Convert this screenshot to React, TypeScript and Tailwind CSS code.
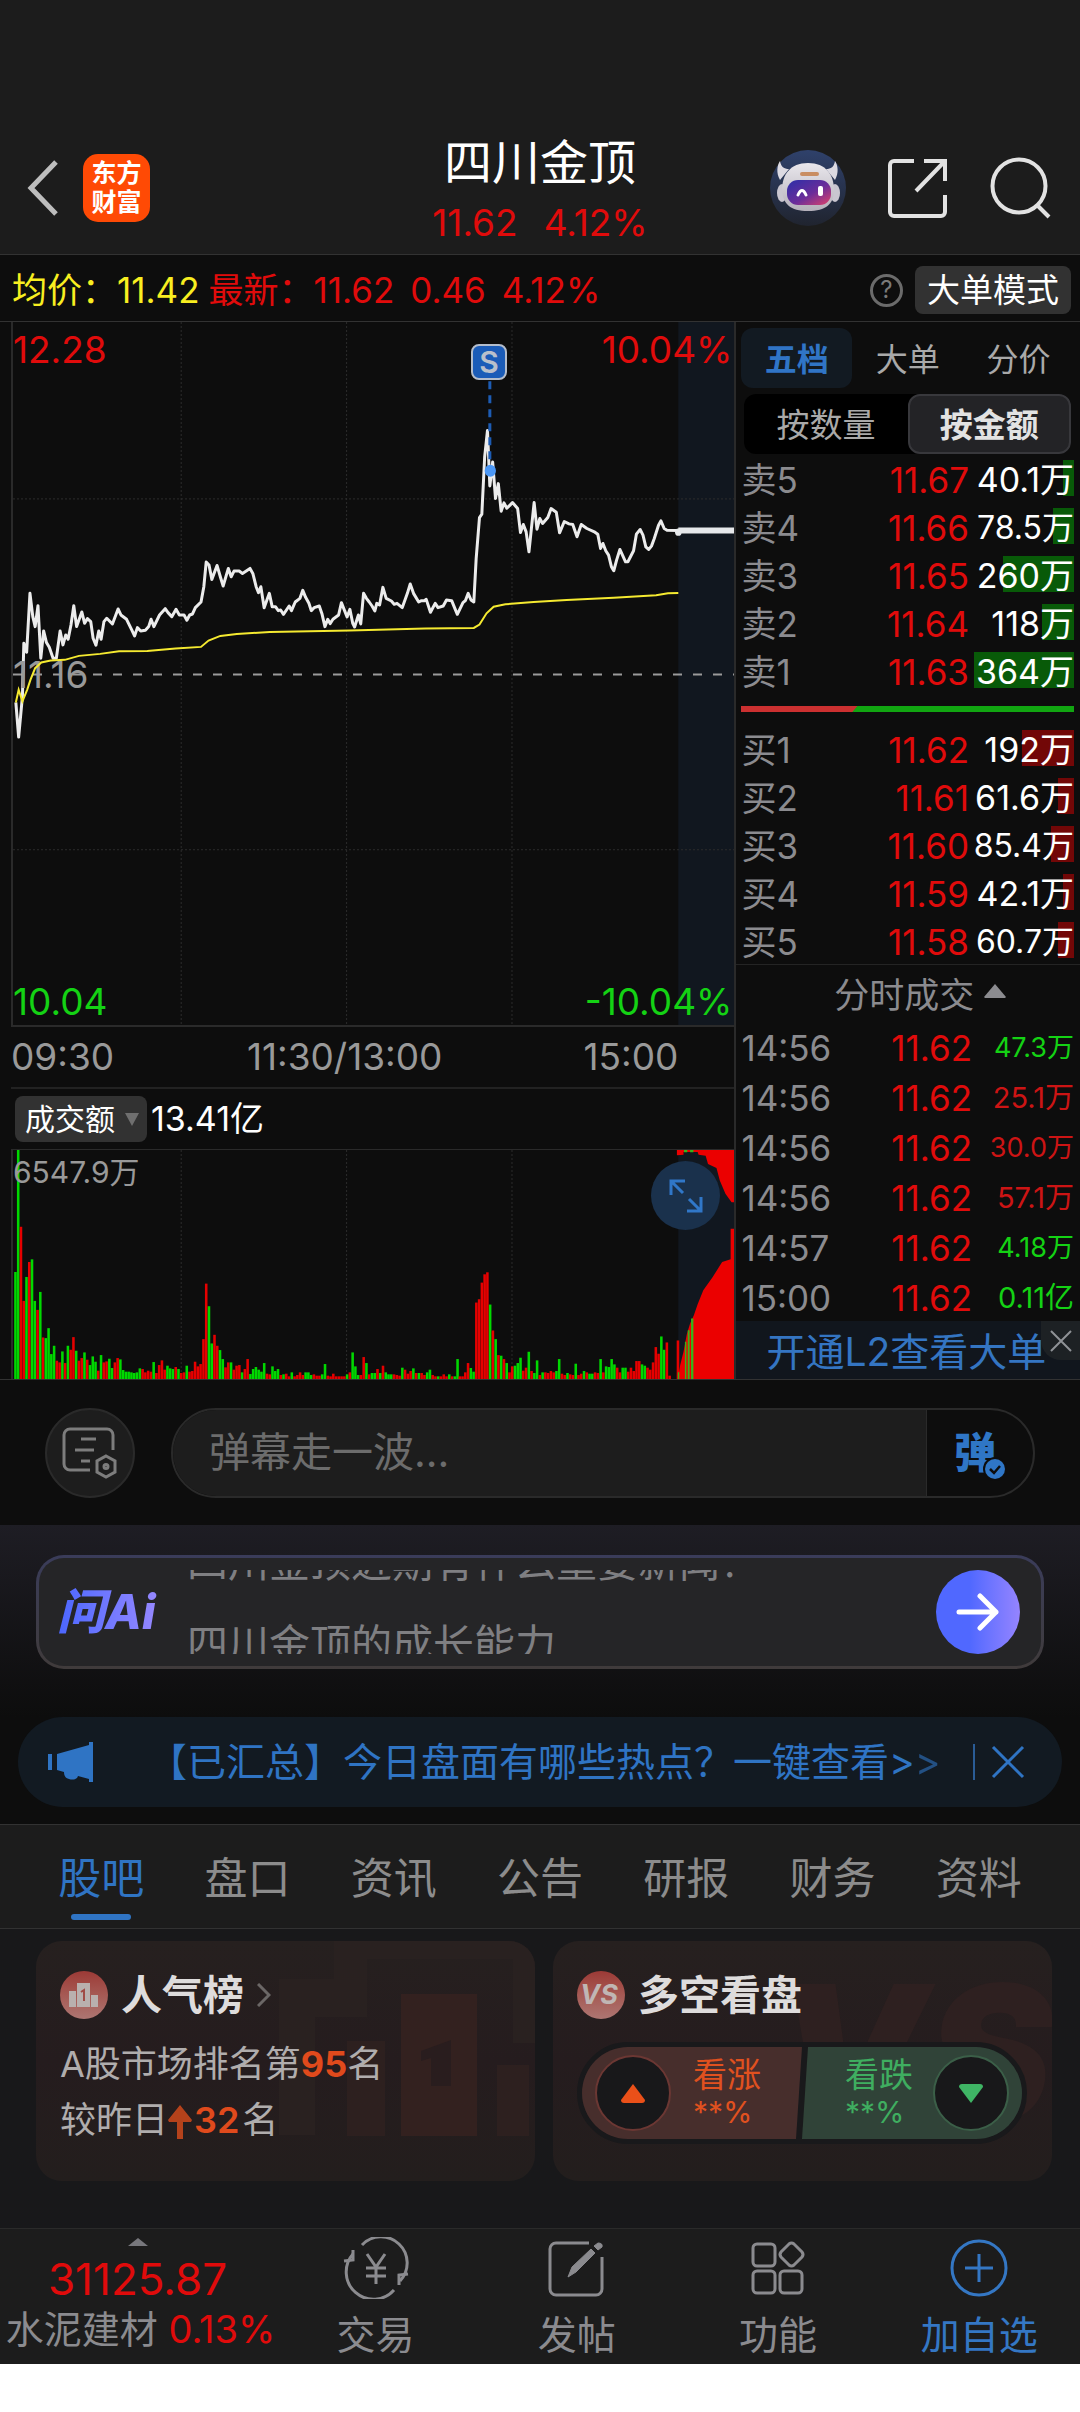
import type { ReactNode } from "react";
import { clsx } from "clsx";

const PRICE_LINE =
  "31,1178 37,1282 45,1160 48,1000 54,1027 61,850 67,920 72,950 78,887 84,1045 90,963 96,998 102,1012 110,1045 117,1045 125,963 131,1005 137,975 142,988 148,945 154,887 160,950 171,906 177,940 183,926 190,935 195,985 201,1006 207,963 212,988 218,935 224,925 236,942 248,897 254,915 266,928 277,960 283,978 289,953 296,963 306,961 313,950 318,928 324,950 336,915 348,896 354,908 362,920 371,898 378,915 388,915 394,931 400,915 406,912 412,893 424,876 430,830 435,756 441,765 447,808 458,766 465,800 471,828 482,775 488,800 494,783 505,783 512,790 528,775 534,790 541,830 546,848 551,830 558,893 569,850 575,890 582,890 588,902 593,900 599,913 611,888 616,902 624,876 634,865 640,841 646,862 653,880 658,902 664,893 675,888 681,913 687,950 693,928 698,941 704,928 716,915 722,878 734,921 740,898 746,940 750,951 758,915 763,942 769,850 775,865 781,876 787,888 793,903 797,880 803,885 810,832 817,865 828,873 834,883 840,880 851,893 862,850 868,822 875,850 886,876 892,872 898,872 902,868 911,907 921,880 927,893 938,888 945,870 956,872 962,893 968,913 980,878 985,872 991,850 997,870 1003,876 1008,745 1015,622 1020,612 1026,440 1032,360 1037,527 1043,455 1049,565 1055,520 1061,603 1067,578 1073,594 1085,577 1096,595 1102,667 1108,643 1114,665 1120,725 1131,577 1137,657 1143,625 1149,640 1160,622 1167,595 1178,606 1185,668 1195,634 1205,641 1213,643 1222,680 1231,643 1243,655 1260,666 1266,672 1272,715 1277,700 1283,722 1289,735 1295,770 1300,782 1306,750 1313,718 1325,755 1330,755 1342,722 1348,672 1356,658 1362,675 1368,710 1374,718 1380,708 1386,685 1395,645 1400,632 1407,655 1413,660 1437,661";
const AVERAGE_LINE =
  "31,1178 37,1140 45,1175 55,1140 62,1110 72,1075 85,1058 105,1052 135,1050 165,1038 210,1032 250,1024 310,1023 370,1016 424,1011 440,992 465,978 500,972 570,966 740,962 900,956 1003,954 1015,944 1030,910 1045,890 1070,883 1130,876 1200,870 1300,863 1390,856 1415,850 1437,849";

/* Minute turnover: start position of each run, then colour + height per minute. */
const VOLUME_RUNS: [number, string][] = [
  [30, "g322 g690 r458 r235 g307 r352 g360 g235 r208 g262 r125 g123 g153 g75 g100 r55 r50 g83 r48 g100 r88 r126 g85 r55 r63 g80 r58 g42 g68 g52 r25 g72 r50 r53 g61 g33 r50 r63 g59 g27 g22 g22 g20 g18 g20"],
  [294, "g32 r30 r20 r25 r22 g51 r18 r42 r56 r28 g40 g32 g30 r36 g30 r18 r20 g40 r22 r24 r52 r38 r45"],
  [429, "r120 r287 g219 g107 r133 r100 g87 g60 r35 r50 g50 r28 r40 r42 g20 r30 r60 g15 g30 g36 g28 g22 g48 r16 r14 g38 g24 g30 r12 g14 r16 r8 g20 r8 r12 r20 r12 g20 g20 g12 r14 r10 r10 g14"],
  [687, "g45 r10 r8 r16 r8 r8 r8 r8 g14 r20 g80 g38 g12 r12 r66 g48 r14 g18 g18 r30 g18 r40 g20 g14 g14 r14 r12 r10 g34 r28 r16 r24 g32 r18 g18 r18 r12 g20 g28 r12 r8 g8 r8 r14 r8 g14 r8 g8 g60"],
  [973, "r8 r8 r20 r48 g33 g22 r230 r240 r290 r315 r321 g224 r146 g120 r72 g70 r60 g48 r20 r38 g40 g48 g64 r25 r34 g82 r24 g18 g56 r12 g20 r20 r18 r24 r20 g24 g60 r16 r12 g18 r14 r12 g46 r12 r16 g24 r20 g16 g16 r20 r18 g60 r20 g38 g36 g60 g44 r34 r20 g34 g34 r22 r34 r24 r54 r54 g44 g40 r34 r28 r50 r96 r76 g128 g88 r110 r10"],
  [1436, "r116"],
];

const VOLUMES = VOLUME_RUNS.flatMap(([start, run]) =>
  run.split(" ").map((bar, i) => ({
    x: start + i * 5.86,
    color: bar[0] === "g" ? "#00d800" : "#e60000",
    height: Number(bar.slice(1)),
  })),
);

type Level = { name: string; price: string; amount: string; bar: number; small?: boolean };
const SELLS: Level[] = [
  { name: "卖5", price: "11.67", amount: "40.1万", bar: 11 },
  { name: "卖4", price: "11.66", amount: "78.5万", bar: 21, small: true },
  { name: "卖3", price: "11.65", amount: "260万", bar: 71 },
  { name: "卖2", price: "11.64", amount: "118万", bar: 32 },
  { name: "卖1", price: "11.63", amount: "364万", bar: 100 },
];
const BUYS: Level[] = [
  { name: "买1", price: "11.62", amount: "192万", bar: 52 },
  { name: "买2", price: "11.61", amount: "61.6万", bar: 16 },
  { name: "买3", price: "11.60", amount: "85.4万", bar: 23, small: true },
  { name: "买4", price: "11.59", amount: "42.1万", bar: 11 },
  { name: "买5", price: "11.58", amount: "60.7万", bar: 16, small: true },
];
const TICKS = [
  { time: "14:56", amount: "47.3万", up: false, small: true },
  { time: "14:56", amount: "25.1万", up: true, small: false },
  { time: "14:56", amount: "30.0万", up: true, small: true },
  { time: "14:56", amount: "57.1万", up: true, small: false },
  { time: "14:57", amount: "4.18万", up: false, small: true },
  { time: "15:00", amount: "0.11亿", up: false, small: false },
];

function Header() {
  return (
    <header className="grid grid-cols-[1fr_auto_1fr] items-center border-b border-[#323232] bg-[#1c1c1c] pt-32 pb-[6px]">
      <div className="flex items-center gap-6 pl-[26px]">
        <button aria-label="返回">
          <svg width="33" height="56" viewBox="0 0 33 56" fill="none" stroke="#bdbdbd" strokeWidth="5">
            <path d="M30 2 5 28l25 26" />
          </svg>
        </button>
        <a href="#home" className="flex h-[68px] w-[67px] flex-col items-center justify-center rounded-[15px] bg-[#ff4a05] text-[25px] leading-[29px] font-bold text-white">
          <span>东方</span>
          <span>财富</span>
        </a>
      </div>
      <div className="text-center">
        <h1 className="text-[48px] leading-[70px] text-white">四川金顶</h1>
        <p className="flex justify-center gap-[26px] text-[37px] leading-[50px] text-[#e00b0b]">
          <span>11.62</span>
          <span>4.12%</span>
        </p>
      </div>
      <div className="flex items-center justify-end gap-[42px] pr-7">
        <button aria-label="智能助手">
          <Robot />
        </button>
        <button aria-label="分享">
          <svg width="60" height="60" viewBox="0 0 60 60" fill="none" stroke="#e2e2e2" strokeWidth="4">
            <path d="M26 3H6a4 4 0 0 0-4 4v47a4 4 0 0 0 4 4h47a4 4 0 0 0 4-4V37" />
            <path d="M36 3h21v20M57 3 28 33" />
          </svg>
        </button>
        <button aria-label="搜索">
          <svg width="62" height="62" viewBox="0 0 62 62" fill="none" stroke="#e2e2e2" strokeWidth="4">
            <circle cx="29" cy="29" r="26.5" />
            <path d="m47 48 12 12" />
          </svg>
        </button>
      </div>
    </header>
  );
}

function Robot() {
  return (
    <svg width="76" height="76" viewBox="0 0 76 76">
      <defs>
        <linearGradient id="robotBg" x1="0" y1="0" x2="0" y2="1">
          <stop offset="0" stopColor="#2f416b" />
          <stop offset="1" stopColor="#20242f" />
        </linearGradient>
        <linearGradient id="visor" x1="0" y1="0" x2="1" y2="1">
          <stop offset="0" stopColor="#2b2fa8" />
          <stop offset="0.55" stopColor="#6a2d9a" />
          <stop offset="1" stopColor="#e0426a" />
        </linearGradient>
        <linearGradient id="shell" x1="0" y1="0" x2="0" y2="1">
          <stop offset="0" stopColor="#e9e7ec" />
          <stop offset="1" stopColor="#b4b0ba" />
        </linearGradient>
      </defs>
      <circle cx="38" cy="38" r="38" fill="url(#robotBg)" />
      <path d="M10 30c-4-7-3-15 0-19 1 6 4 8 9 8zM65 30c4-7 3-15 0-19-1 6-4 8-9 8z" fill="#dcdae2" />
      <ellipse cx="12" cy="43" rx="5" ry="9" fill="#c9c6d0" />
      <ellipse cx="65" cy="43" rx="5" ry="9" fill="#c9c6d0" />
      <path d="M38 13c18 0 26 12 26 27 0 14-8 21-26 21S13 54 12 40c0-15 8-27 26-27z" fill="url(#shell)" />
      <rect x="17" y="30" width="44" height="25" rx="11" fill="url(#visor)" />
      <rect x="30" y="22" width="19" height="4" rx="2" fill="#c98d62" />
      <path d="M28 45q4-9 8 0" fill="none" stroke="#fff" strokeWidth="3" strokeLinecap="round" />
      <rect x="48" y="36" width="5" height="10" rx="2" fill="#fff" />
    </svg>
  );
}

function QuoteStrip() {
  return (
    <div className="flex h-[67px] items-center border-b border-[#323232] pt-1 pr-[9px] pl-3 text-[35px] leading-[48px] whitespace-nowrap text-[#e00b0b]">
      <span className="text-[#f8ee20]">均价：11.42</span>
      <span className="ml-[9px]">最新：11.62</span>
      <span className="ml-4">0.46</span>
      <span className="ml-4">4.12%</span>
      <button aria-label="说明" className="ml-auto flex size-[33px] items-center justify-center rounded-full border-[3px] border-[#6b6b6b] text-[24px] leading-6 text-[#7a7a7a]">
        ?
      </button>
      <button className="ml-3 rounded-lg bg-[#323232] px-3 text-[33px] text-white">大单模式</button>
    </div>
  );
}

function PriceChart() {
  return (
    <div className="relative h-[705px] border-b-2 border-l-2 border-[#2a2a2a] text-[37px] leading-10">
      <svg className="absolute inset-0 size-full" viewBox="25 34 1531 2114" preserveAspectRatio="none" fill="none" strokeLinejoin="round">
        <rect x="1437" y="34" width="119" height="2114" fill="#11171f" />
        <g stroke="#2c2c2c" strokeDasharray="2 2" strokeWidth="1">
          {[382, 733, 1084].map((x) => (
            <path key={x} d={`M${x} 34V2148`} vectorEffect="non-scaling-stroke" />
          ))}
          <path d="M25 566H1556M25 1621H1556" vectorEffect="non-scaling-stroke" />
        </g>
        <path d="M25 1094H1556" stroke="#9a9a9a" strokeWidth="2" strokeDasharray="9 11" vectorEffect="non-scaling-stroke" />
        <polyline points={PRICE_LINE} stroke="#ececec" strokeWidth="3" vectorEffect="non-scaling-stroke" />
        <path d="M1437 661H1556" stroke="#e6e8ea" strokeWidth="6" vectorEffect="non-scaling-stroke" />
        <ellipse cx="1437" cy="666" rx="7" ry="11" fill="#e6e8ea" />
        <path d="M1037 212V460" stroke="#1d5cb4" strokeWidth="3" strokeDasharray="8 6" vectorEffect="non-scaling-stroke" />
        <ellipse cx="1038" cy="481" rx="12" ry="18" fill="#4b97f5" />
      </svg>
      <span className="absolute top-[333px] left-0 text-[#999999]">11.16</span>
      <svg className="absolute inset-0 size-full" viewBox="25 34 1531 2114" preserveAspectRatio="none" fill="none">
        <polyline points={AVERAGE_LINE} stroke="#f5ea30" strokeWidth="2" vectorEffect="non-scaling-stroke" />
      </svg>
      <span className="absolute top-2 left-0 text-[#e00b0b]">12.28</span>
      <span className="absolute top-2 right-[2px] text-[#e00b0b]">10.04%</span>
      <span className="absolute bottom-[3px] left-0 text-[#14d214]">10.04</span>
      <span className="absolute right-[2px] bottom-[3px] text-[#14d214]">-10.04%</span>
      <span className="absolute top-[22px] left-[66%] flex size-9 -translate-x-1/2 items-center justify-center rounded-lg border-2 border-[#b4bdcb] bg-[#1b5cb8] text-[30px] font-semibold text-[#b9c0cb]">
        S
      </span>
    </div>
  );
}

function VolumeChart() {
  return (
    <div className="relative h-[230px] border-t border-l-2 border-[#2a2a2a]">
      <svg className="absolute inset-0 size-full" viewBox="25 208 1531 689" preserveAspectRatio="none">
        <rect x="1437" y="208" width="119" height="689" fill="#11171f" />
        <g stroke="#2c2c2c" strokeDasharray="2 2" strokeWidth="1">
          {[382, 733, 1084].map((x) => (
            <path key={x} d={`M${x} 208V897`} vectorEffect="non-scaling-stroke" />
          ))}
        </g>
        {VOLUMES.map((v, i) => (
          <rect key={i} x={v.x - 2.5} y={897 - v.height} width="5.4" height={v.height} fill={v.color} />
        ))}
        <path
          d="M1436 897 1441 855 1448 815 1455 762 1462 730 1470 705 1478 672 1490 630 1510 590 1530 545 1548 537V445H1556V897z"
          fill="#eb0000"
        />
        <path d="M1436 897v-20h3v20zM1451 897V785h3v112zM1457 897V750h4v147zM1464 897V715h5v182z" fill="#35b51a" />
        <path d="M1434 208H1556V365H1550L1537 340 1525 300 1518 262 1500 250 1495 225 1480 222 1478 214 1448 214V222L1434 224z" fill="#eb0000" />
        <path d="M1449 208h7v7h-7zM1462 208h7v7h-7z" fill="#35b51a" />
      </svg>
      <span className="absolute top-[2px] left-0 text-[30px] leading-10 text-[#999999]">6547.9万</span>
      <button aria-label="全屏" className="absolute top-[11px] right-[14px] flex size-[69px] items-center justify-center rounded-full bg-[#1a314c]">
        <svg width="34" height="34" viewBox="0 0 34 34" fill="none" stroke="#3077c8" strokeWidth="3">
          <path d="M2 16V2h14M2 2l12 12M32 18v14H18M32 32 20 20" />
        </svg>
      </button>
    </div>
  );
}

function Charts() {
  return (
    <section className="w-[68%] pl-[11px]">
      <PriceChart />
      <div className="grid h-15 grid-cols-3 items-center pr-[56px] text-[37px] leading-10 text-[#999999]">
        <span>09:30</span>
        <span className="text-center">11:30/13:00</span>
        <span className="text-right">15:00</span>
      </div>
      <div className="flex h-[62px] items-center gap-1 border-t-2 border-[#222222] pl-1 text-white">
        <button className="flex h-[46px] items-center gap-[10px] rounded-lg bg-[#323232] pr-2 pl-[10px] text-[30px]">
          成交额
          <svg width="14" height="13" viewBox="0 0 14 13" fill="#6f6f6f">
            <path d="M0 0h14L7 13z" />
          </svg>
        </button>
        <span className="text-[34px] leading-10">13.41亿</span>
      </div>
      <VolumeChart />
    </section>
  );
}

function Levels({ rows, barClass }: { rows: Level[]; barClass: string }) {
  return (
    <table className="w-full text-[35px] leading-9">
      <tbody>
        {rows.map((r) => (
          <tr key={r.name} className="h-12">
            <th scope="row" className="p-0 pt-1 text-left font-normal text-[#8b8b8f]">
              {r.name}
            </th>
            <td className="p-0 pt-1 text-right text-[#e00b0b]">{r.price}</td>
            <td className={clsx("relative w-[105px] p-0 pt-1 text-right text-white", r.small ? "text-[32px]" : "text-[34px]")}>
              <span className={clsx("absolute top-[6px] right-0 h-9", barClass)} style={{ width: r.bar }} />
              <span className="relative">{r.amount}</span>
            </td>
          </tr>
        ))}
      </tbody>
    </table>
  );
}

function OrderBook() {
  return (
    <aside className="flex min-w-0 flex-1 flex-col border-l-2 border-[#2a2a2a]">
      <div className="pt-[6px] pr-[6px] pl-[5px]">
        <div className="grid h-15 grid-cols-3 text-[32px] text-[#a9a9a9]">
          <button className="rounded-xl bg-[#121a22] pt-1 font-bold text-[#3075c6]">五档</button>
          <button className="pt-1">大单</button>
          <button className="pt-1">分价</button>
        </div>
        <div className="mx-[3px] mt-[6px] grid h-15 grid-cols-2 rounded-xl bg-black text-[33px]">
          <button className="pt-1 text-[#a9a9a9]">按数量</button>
          <button className="rounded-xl border-2 border-[#38383c] bg-[#232326] pt-1 font-bold text-[#e2e2e2]">按金额</button>
        </div>
        <Levels rows={SELLS} barClass="bg-[#085a08]" />
        <div className="my-3 flex h-[6px] bg-[#11a511]">
          <svg className="h-[6px] w-[35%]" viewBox="0 0 116 6" preserveAspectRatio="none">
            <path d="M0 0h116l-5 6H0z" fill="#cb3030" />
          </svg>
        </div>
        <Levels rows={BUYS} barClass="bg-[#720707]" />
      </div>
      <button className="flex h-[57px] items-center justify-center gap-[10px] border-t border-[#242424] pt-1 pl-6 text-[35px] text-[#8b8b8f]">
        分时成交
        <svg width="22" height="14" viewBox="0 0 22 14" fill="#8b8b8f" className="mb-2">
          <path d="M11 0 22 13 21 14H1L0 13z" />
        </svg>
      </button>
      <div className="pr-[6px] pl-[5px]">
        <table className="w-full text-[35px] leading-9">
          <tbody>
            {TICKS.map((t, i) => (
              <tr key={i} className="h-[50px]">
                <td className="p-0 pt-1 text-[#8b8b8f]">{t.time}</td>
                <td className="p-0 pt-1 text-right text-[#e00b0b]">11.62</td>
                <td className={clsx("w-[102px] p-0 pt-1 text-right", t.up ? "text-[#cc1414]" : "text-[#14d214]", t.small ? "text-[27px]" : "text-[29px]")}>
                  {t.amount}
                </td>
              </tr>
            ))}
          </tbody>
        </table>
      </div>
      <div className="relative flex flex-1 items-center bg-[#11161d] pt-1 pl-[30px]">
        <a href="#l2" className="text-[39px] leading-[50px] whitespace-nowrap text-[#3475c2]">
          开通L2查看大单
        </a>
        <button aria-label="关闭" className="absolute top-0 right-0 flex size-[39px] items-center justify-center rounded-bl-[20px] bg-[#202427]/80">
          <svg width="22" height="22" viewBox="0 0 22 22" stroke="#8f9296" strokeWidth="2">
            <path d="m1 1 20 20M21 1 1 21" />
          </svg>
        </button>
      </div>
    </aside>
  );
}

function DanmakuBar() {
  return (
    <div className="flex items-center gap-9 border-t border-[#323232] pt-7 pr-[45px] pb-[27px] pl-[45px]">
      <button aria-label="弹幕设置" className="flex size-[90px] shrink-0 items-center justify-center rounded-full border-2 border-[#2a2a2a] bg-[#1d1d1d]">
        <svg width="56" height="52" viewBox="0 0 56 52" fill="none" stroke="#7d7d7d" strokeWidth="3">
          <path d="M28 43H8a6 6 0 0 1-6-6V8a6 6 0 0 1 6-6h37a6 6 0 0 1 6 6v15" />
          <path d="M19 12h15M13 23h19M19 34h9" />
          <path d="m44 29 9 5v11l-9 5-9-5V34z" />
          <circle cx="44" cy="39.500" r="2" />
        </svg>
      </button>
      <div className="flex h-[90px] flex-1 overflow-hidden rounded-full border-2 border-[#2a2a2a]">
        <input aria-label="弹幕" placeholder="弹幕走一波..." className="min-w-0 flex-1 bg-[#1d1d1d] pl-9 text-[41px] outline-none placeholder:text-[#6c6c6c]" />
        <button className="relative w-[107px] border-l border-[#2a2a2a] pl-[27px] text-left text-[42px] leading-[80px] font-black text-[#2f76c6]">
          弹
          <svg className="absolute top-[47px] left-[56px]" width="24" height="24" viewBox="0 0 24 24">
            <circle cx="12" cy="12" r="12" fill="#0d0d0d" />
            <circle cx="12" cy="12" r="10" fill="#2f76c6" />
            <path d="m7 12 4 4 6-7" fill="none" stroke="#0d0d0d" strokeWidth="2.500" />
          </svg>
        </button>
      </div>
    </div>
  );
}

function AskAi() {
  return (
    <div className="bg-linear-to-b from-[#1e1d24] to-[#0d0d0d] px-9 pt-[30px] pb-12">
      <div className="rounded-[28px] bg-linear-to-b from-[#3a3c5a] to-[#403b3b] p-[3px]">
        <div className="flex h-[108px] items-center rounded-[25px] bg-[#252527] pr-[21px] pl-[18px]">
          <strong className="w-[130px] bg-linear-to-r from-[#4a66ff] to-[#ab90ff] bg-clip-text text-[48px] leading-[60px] font-extrabold text-transparent italic">
            问Ai
          </strong>
          <div className="h-[84px] flex-1 overflow-hidden text-[41px] leading-[82px] text-[#7f7f82]">
            <p className="-mt-[49px]">四川金顶近期有什么重要新闻？</p>
            <p>四川金顶的成长能力</p>
          </div>
          <button aria-label="提问" className="flex size-[84px] items-center justify-center rounded-full bg-linear-to-r from-[#5068ff] from-40% to-[#9584ff]">
            <svg width="44" height="38" viewBox="0 0 44 38" fill="none" stroke="#fff" strokeWidth="5" strokeLinecap="round" strokeLinejoin="round">
              <path d="M3 19h37M24 3l16 16-16 16" />
            </svg>
          </button>
        </div>
      </div>
    </div>
  );
}

function Notice() {
  return (
    <div className="mx-[18px] mb-[17px] flex h-[90px] items-center rounded-full bg-[#121a22] pr-[37px] pl-[30px] text-[#2f74c4]">
      <svg width="46" height="40" viewBox="0 0 46 40" fill="#2f74c4" className="shrink-0">
        <path d="M0 12h4v16H0zM9 12 41 3V0h4v40h-4v-3l-11-3c-1 4-6 4-9 3-4-1-5-4-5-7l-7-2z" />
      </svg>
      <a href="#hot" className="ml-[54px] flex-1 text-[39px] leading-[56px] whitespace-nowrap">
        【已汇总】今日盘面有哪些热点？一键查看&gt;<span className="opacity-60">&gt;</span>
      </a>
      <button aria-label="关闭" className="flex h-9 items-center border-l-2 border-[#2a5c96] pl-4">
        <svg width="34" height="34" viewBox="0 0 34 34" stroke="#2f74c4" strokeWidth="3">
          <path d="m2 2 30 30M32 2 2 32" />
        </svg>
      </button>
    </div>
  );
}

function SectionTabs() {
  return (
    <nav className="grid h-[105px] grid-cols-7 border-y border-[#323232] bg-[#1c1c1c] px-7 text-[43px] text-[#8c8c8c]">
      {["股吧", "盘口", "资讯", "公告", "研报", "财务", "资料"].map((t, i) => (
        <a key={t} href={`#tab-${i}`} className={clsx("flex flex-col items-center pt-[22px] leading-[62px]", i === 0 && "text-[#2f74c4]")}>
          {t}
          {i === 0 && <span className="mt-[5px] h-[6px] w-15 rounded-full bg-[#2f74c4]" />}
        </a>
      ))}
    </nav>
  );
}

function CardIcon({ children }: { children: ReactNode }) {
  return (
    <span className="flex size-12 items-center justify-center rounded-full bg-linear-to-b from-[#9c3a36] to-[#ad7672]">{children}</span>
  );
}

function Cards() {
  return (
    <section className="grid grid-cols-2 gap-[18px] bg-[#18181a] pt-3 pr-7 pb-[47px] pl-9">
      <article className="relative h-[240px] overflow-hidden rounded-[26px] bg-linear-to-b from-[#26201f] via-[#251c1e] to-[#231e1d] pt-[26px] pl-6 text-[36px] leading-[56px] text-[#b0adad]">
        <svg className="absolute top-0 right-0 h-full w-[260px]" viewBox="0 0 260 240" aria-hidden="true">
          <path d="M4 194V38h55V0h201v102h-22V18H92v58H40v118z" fill="#292120" />
          <path d="M126 53h76v142h-76z" fill="#33211f" />
          <path d="M72 100h38v95H72zM222 124h32v71h-32z" fill="#2d201f" />
          <path d="M176 99v46h-20v-28l-10 3v-10z" fill="#291d1e" />
        </svg>
        <h2 className="relative flex items-center gap-[13px] text-[41px] font-bold text-[#dedcdc]">
          <CardIcon>
            <svg width="30" height="24" viewBox="0 0 30 24" fill="#b9b0ae">
              <path d="M0 8h7v16H0zM8 0h13v24H8zM22 12h7v12h-7z" />
              <path d="M12 9l3-2v11" fill="none" stroke="#a04a45" strokeWidth="2" />
            </svg>
          </CardIcon>
          人气榜
          <svg width="14" height="24" viewBox="0 0 14 24" fill="none" stroke="#6b6766" strokeWidth="3">
            <path d="m1 1 11 11L1 23" />
          </svg>
        </h2>
        <p className="relative mt-[13px]">
          A股市场排名第<b className="font-bold text-[#e04a1c]">95</b>名
        </p>
        <p className="relative flex items-center">
          较昨日
          <svg width="24" height="34" viewBox="0 0 24 34" fill="#b5421b" className="mt-1">
            <path d="M12 0 24 15l-1 2h-8v17H9V17H1l-1-2z" />
          </svg>
          <b className="mr-[3px] ml-[2px] font-semibold text-[#e04a1c]">32</b>名
        </p>
      </article>
      <article className="relative h-[240px] overflow-hidden rounded-[26px] bg-linear-to-b from-[#26201f] via-[#251c1e] to-[#231e1d] px-6 pt-[26px]">
        <span aria-hidden="true" className="absolute -top-2 right-0 text-[190px] leading-[240px] font-black text-[#2e2020] italic">
          VS
        </span>
        <h2 className="relative flex items-center gap-[13px] text-[41px] leading-[56px] font-bold text-[#dedcdc]">
          <CardIcon>
            <span className="pr-1 text-[27px] font-bold text-[#c0b6b4] italic">VS</span>
          </CardIcon>
          多空看盘
        </h2>
        <div className="relative mt-[19px] mr-px flex h-[102px] rounded-full border-[5px] border-[#19191b] bg-[#19191b] text-[34px] leading-9">
          <svg className="absolute inset-0 size-full" viewBox="0 0 440 92" preserveAspectRatio="none" aria-hidden="true">
            <path d="M46 0H220L214 92H46A46 46 0 0 1 46 0z" fill="#472e2c" />
            <path d="M226 0H394A46 46 0 0 1 394 92H220z" fill="#304338" />
          </svg>
          <button className="relative flex flex-1 items-center gap-[22px] pl-[13px] text-left text-[#e0511f]">
            <span className="flex size-[76px] items-center justify-center rounded-full border-2 border-[#6b3733] bg-[#18181a]">
              <svg width="24" height="19" viewBox="0 0 24 19" fill="#ea5019">
                <path d="M12 0 24 16q0 3-3 3H3q-3 0-3-3z" />
              </svg>
            </span>
            <span>
              看涨
              <br />
              <span className="text-[30px]">**%</span>
            </span>
          </button>
          <button className="relative flex flex-1 items-center justify-end gap-5 pr-[13px] text-left text-[#3fae60]">
            <span>
              看跌
              <br />
              <span className="text-[30px]">**%</span>
            </span>
            <span className="flex size-[76px] items-center justify-center rounded-full border-2 border-[#3b5f48] bg-[#18181a]">
              <svg width="24" height="19" viewBox="0 0 24 19" fill="#3fb565">
                <path d="M12 19 0 3q0-3 3-3h18q3 0 3 3z" />
              </svg>
            </span>
          </button>
        </div>
      </article>
    </section>
  );
}

function NavItem({ label, active, children }: { label: string; active?: boolean; children: ReactNode }) {
  return (
    <button className={clsx("flex flex-1 flex-col items-center pt-2 text-[39px] leading-[56px]", active ? "text-[#3477c4]" : "text-[#8b8b8f]")}>
      <svg width="66" height="62" viewBox="0 0 66 62" fill="none" stroke="currentColor" strokeWidth="3">
        {children}
      </svg>
      <span className="mt-2">{label}</span>
    </button>
  );
}

function BottomNav() {
  return (
    <footer className="flex h-[136px] border-t border-[#2a2a2a] bg-[#1c1c1c]">
      <a href="#sector" className="flex w-[275px] flex-col items-center whitespace-nowrap text-[#e00b0b]">
        <svg width="20" height="8" viewBox="0 0 20 8" fill="#77777c" className="mt-[9px]">
          <path d="M10 0 20 8H0z" />
        </svg>
        <span className="mt-[7px] text-[44px] leading-[52px]">31125.87</span>
        <span className="pl-[6px] text-[38px] leading-[48px]">
          <span className="text-[#8b8b8f]">水泥建材</span> 0.13%
        </span>
      </a>
      <NavItem label="交易">
        <path d="M19 8A26 26 0 0 1 57 44" />
        <path d="M51 53A26 26 0 0 1 10 17" />
        <path d="M56 48V38l9-1M10 13v10l-9 1" />
        <path d="m24 17 9 13 9-13M23 31h20M23 39h20M33 30v17" />
      </NavItem>
      <NavItem label="发帖">
        <path d="M45 6H12a6 6 0 0 0-6 6v40a6 6 0 0 0 6 6h40a6 6 0 0 0 6-6V20" />
        <path d="m24 40 4-10 19-18 4 4-19 19z" fill="currentColor" strokeWidth="1" />
        <path d="m50 9 4-3q5 0 4 4l-4 3z" fill="currentColor" strokeWidth="1" />
      </NavItem>
      <NavItem label="功能">
        <rect x="8" y="7" width="22" height="22" rx="4" />
        <rect x="8" y="34" width="22" height="22" rx="4" />
        <rect x="35" y="34" width="22" height="22" rx="4" />
        <path d="M44 7q2.500-2 5 0l8 8q2 2.500 0 5l-8 8q-2.500 2-5 0l-8-8q-2-2.500 0-5z" />
      </NavItem>
      <NavItem label="加自选" active>
        <circle cx="33" cy="31" r="27" />
        <path d="M33 17v28M19 31h28" />
      </NavItem>
    </footer>
  );
}

export default function App() {
  return (
    <div className="min-h-screen bg-white font-['Inter','Noto_Sans_CJK_SC',sans-serif]">
      <main className="bg-[#0d0d0d]">
        <Header />
        <QuoteStrip />
        <div className="flex">
          <Charts />
          <OrderBook />
        </div>
        <DanmakuBar />
        <AskAi />
        <Notice />
        <SectionTabs />
        <Cards />
        <BottomNav />
      </main>
    </div>
  );
}
